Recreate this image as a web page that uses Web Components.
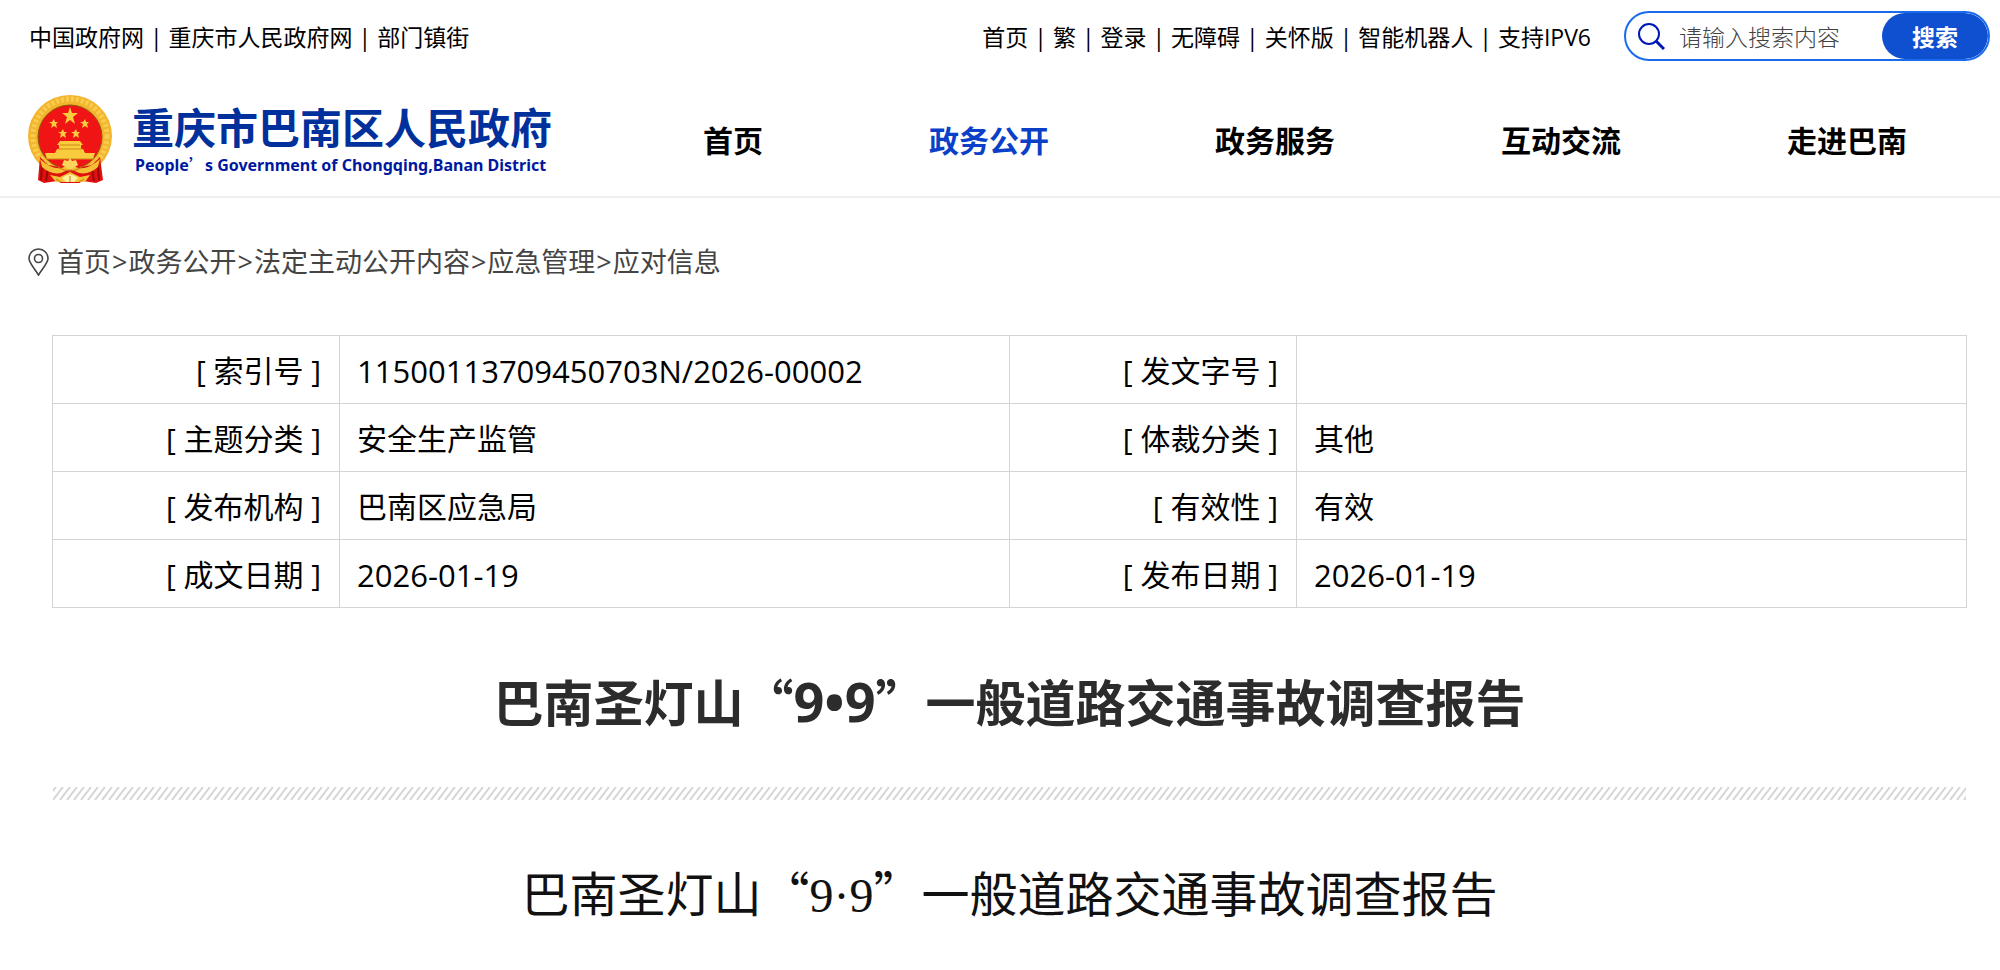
<!DOCTYPE html>
<html lang="zh-CN">
<head>
<meta charset="utf-8">
<meta name="viewport" content="width=device-width, initial-scale=1">
<title>巴南圣灯山“9•9”一般道路交通事故调查报告</title>
<style>
  body {
    margin: 0;
    background: #fff;
    color: #000;
    font-family: 'Open Sans', 'Noto Sans CJK SC', sans-serif;
  }
</style>
</head>
<body>
<gov-page>
  <gov-topbar slot="header">
    <gov-links slot="left">
      <a href="#">中国政府网</a> |
      <a href="#">重庆市人民政府网</a> |
      <a href="#">部门镇街</a>
    </gov-links>
    <gov-links slot="right">
      <a href="#">首页</a> |
      <a href="#">繁</a> |
      <a href="#">登录</a> |
      <a href="#">无障碍</a> |
      <a href="#">关怀版</a> |
      <a href="#">智能机器人</a> |
      <a href="#">支持IPV6</a>
    </gov-links>
    <gov-search slot="right"></gov-search>
  </gov-topbar>
  <gov-masthead slot="header">
    <gov-logo slot="logo"></gov-logo>
    <gov-nav-item>首页</gov-nav-item>
    <gov-nav-item active>政务公开</gov-nav-item>
    <gov-nav-item>政务服务</gov-nav-item>
    <gov-nav-item>互动交流</gov-nav-item>
    <gov-nav-item>走进巴南</gov-nav-item>
  </gov-masthead>
  <gov-breadcrumb>
    <a href="#">首页</a>&gt;
    <a href="#">政务公开</a>&gt;
    <a href="#">法定主动公开内容</a>&gt;
    <a href="#">应急管理</a>&gt;
    <a href="#">应对信息</a>
  </gov-breadcrumb>
  <gov-doc-info></gov-doc-info>
  <gov-article></gov-article>
</gov-page>

<script>
const define = (name, html, setup) => {
  const template = document.createElement('template');
  template.innerHTML = html;

  customElements.define(name, class extends HTMLElement {
    constructor() {
      super();
      this.attachShadow({ mode: 'open' });
      this.shadowRoot.appendChild(template.content.cloneNode(true));
    }

    connectedCallback() {
      if (setup) setup(this, this.shadowRoot);
    }
  });
};

define('gov-page', `
  <style>
    :host { display: block; }
    header { border-bottom: 2px solid #f0f0f0; }
    main { padding: 44px 28px 40px; }
  </style>
  <header><slot name="header"></slot></header>
  <main><slot></slot></main>
`);

define('gov-topbar', `
  <style>
    :host {
      display: flex;
      justify-content: space-between;
      align-items: center;
      padding: 11px 10px 0 29px;
    }
    .right { display: flex; align-items: center; gap: 33px; }
  </style>
  <slot name="left"></slot>
  <div class="right"><slot name="right"></slot></div>
`);

define('gov-links', `
  <style>
    :host {
      display: block;
      padding-top: 2px;
      font-size: 23px;
      line-height: 32px;
      white-space: nowrap;
    }
    ::slotted(a) { color: #000; text-decoration: none; }
  </style>
  <slot></slot>
`);

define('gov-search', `
  <style>
    :host { display: block; }
    form {
      display: flex;
      box-sizing: border-box;
      width: 366px;
      height: 50px;
      align-items: center;
      border: 2px solid #1a6cec;
      border-radius: 25px;
      overflow: hidden;
    }
    svg { flex: none; margin-left: 11px; }
    input {
      flex: 1;
      min-width: 0;
      padding: 2px 0 0 14px;
      border: 0;
      outline: 0;
      background: none;
      color: #333;
      font: 300 23px/32px 'Open Sans', 'Noto Sans CJK SC', sans-serif;
    }
    input::placeholder { color: #444; }
    button {
      width: 106px;
      height: 46px;
      padding: 2px 0 0;
      border: 0;
      border-radius: 23px;
      background: #0e50cf;
      color: #fff;
      font: bold 23px/32px 'Open Sans', 'Noto Sans CJK SC', sans-serif;
    }
  </style>
  <form>
    <svg width="28" height="28" viewBox="0 0 28 28" fill="none" stroke="#0018b8" stroke-width="2" aria-hidden="true">
      <circle cx="12" cy="12" r="10"/>
      <path d="M19 19l8 8" stroke-width="3"/>
    </svg>
    <input type="text" placeholder="请输入搜索内容" aria-label="请输入搜索内容">
    <button type="button">搜索</button>
  </form>
`);

define('gov-masthead', `
  <style>
    :host {
      display: flex;
      justify-content: space-between;
      align-items: flex-start;
      padding: 33px 10px 12px 28px;
    }
    nav { display: flex; padding-top: 27px; }
  </style>
  <slot name="logo"></slot>
  <nav><slot></slot></nav>
`);

define('gov-nav-item', `
  <style>
    :host { display: block; padding: 0 83px; }
    a {
      color: #000;
      font-size: 30px;
      font-weight: bold;
      line-height: 40px;
      text-decoration: none;
      white-space: nowrap;
    }
    :host([active]) a { color: #0a3fc8; }
  </style>
  <a href="#"><slot></slot></a>
`);

define('gov-logo', `
  <style>
    :host { display: block; }
    a {
      display: flex;
      gap: 19px;
      color: #00309c;
      text-decoration: none;
      white-space: nowrap;
    }
    strong { display: block; font-size: 42px; line-height: 48px; margin-top: 10px; }
    small {
      display: block;
      padding-left: 3px;
      color: #0018a0;
      font: bold 16px/24px 'Noto Sans', 'Noto Sans CJK SC', sans-serif;
    }
    small span { font-family: 'Noto Sans CJK SC', sans-serif; }
  </style>
  <a href="#">
    <svg width="85" height="90" viewBox="0 0 85 90" aria-hidden="true">
      <ellipse cx="42" cy="42" rx="42" ry="41" fill="#f2b52c"/>
      <ellipse cx="42" cy="42" rx="37" ry="37" fill="none" stroke="#f9cc50" stroke-width="5" stroke-dasharray="3 2"/>
      <ellipse cx="42" cy="43" rx="32" ry="32" fill="#f01414" stroke="#8a5a10" stroke-width="1"/>
      <g fill="#f8cc3c">
        <path d="M42 13l2 6h6l-5 4 2 7-5-4-5 4 2-7-5-4h6z"/>
        <path d="M26 25l1 3h3l-2 2 1 4-3-2-3 2 1-4-3-2h3z"/>
        <path d="M57 25l1 3h3l-2 2 1 4-3-2-3 2 1-4-3-2h3z"/>
        <path d="M35 35l1 3h3l-2 2 1 4-3-2-3 2 1-4-3-2h3z"/>
        <path d="M48 35l1 3h3l-2 2 1 4-3-2-3 2 1-4-3-2h3z"/>
        <path d="M32 47h20l3 4H29z"/>
        <path d="M31 51h22v4H31zM29 55h26l2 4H27zM17 59h50l-2 6H19z"/>
      </g>
      <path d="M32 51h20M30 55h24M18 65h48" stroke="#d08a18"/>
      <path d="M12 63l8 8 22 4 22-4 8-8 3 23-7 3-13-2-4 2H33l-4-2-13 2-6-3z" fill="#e01010"/>
      <path d="M14 70l-1 16M20 74l-2 13M70 70l1 16M64 74l2 13" stroke="#9c0808" stroke-width="2"/>
      <path d="M12 65q12 11 22 9l8-4 8 4q10 2 22-9l-2 8q-9 8-19 6l-9-4-9 4q-10 2-19-6z" fill="#f5be34"/>
      <path d="M34 71l2-5 4 1 2-3 2 3 4-1 2 5-8 5z" fill="#fbd45a"/>
      <path d="M30 73q12 8 24 0" fill="none" stroke="#c87814"/>
      <path d="M22 81l10 2 10-5 10 5 10-2-5 7H28z" fill="#f5c236"/>
      <path d="M34 84q8-7 16 0l-4 4h-8z" fill="#fff0a0"/>
      <path d="M28 85l5 3M56 85l-5 3M42 82v6" stroke="#c87814"/>
    </svg>
    <span>
      <strong>重庆市巴南区人民政府</strong>
      <small>People<span>’</span>s Government of Chongqing,Banan District</small>
    </span>
  </a>
`);

define('gov-breadcrumb', `
  <style>
    :host {
      display: flex;
      align-items: center;
      gap: 1px;
      color: #444;
      font-size: 27px;
      line-height: 40px;
      white-space: nowrap;
    }
    svg { flex: none; margin-right: 7px; }
    ::slotted(a) { color: #444; text-decoration: none; }
  </style>
  <svg width="21" height="28" viewBox="0 0 21 28" fill="none" stroke="#444" stroke-width="1.6" aria-hidden="true">
    <path d="M10.500 27C7 21 1 15 1 10.500a9.500 9.500 0 0 1 19 0c0 4.500-6 10.500-9.500 16.500z"/>
    <circle cx="10.500" cy="10.500" r="4"/>
  </svg>
  <slot></slot>
`);

const docInfo = [
  ['索引号', '11500113709450703N/2026-00002', '发文字号', ''],
  ['主题分类', '安全生产监管', '体裁分类', '其他'],
  ['发布机构', '巴南区应急局', '有效性', '有效'],
  ['成文日期', '2026-01-19', '发布日期', '2026-01-19'],
];

define('gov-doc-info', `
  <style>
    :host { display: block; margin: 53px 5px 0 24px; }
    table {
      width: 100%;
      border-collapse: collapse;
      table-layout: fixed;
      font-size: 30px;
      line-height: 40px;
    }
    th, td { height: 68px; padding: 2px 18px 0 17px; border: 1px solid #d4d4d4; box-sizing: border-box; }
    th { width: 15%; font-weight: normal; text-align: right; }
    td { width: 35%; text-align: left; }
    .code { font-size: 31px; }
  </style>
  <table><tbody></tbody></table>
`, (host, root) => {
  const cell = value => `<td${/^\d/.test(value) ? ' class="code"' : ''}>${value}</td>`;
  root.querySelector('tbody').innerHTML = docInfo.map(([k1, v1, k2, v2]) => `
    <tr>
      <th scope="row">[ ${k1} ]</th>${cell(v1)}
      <th scope="row">[ ${k2} ]</th>${cell(v2)}
    </tr>
  `).join('');
});

define('gov-article', `
  <style>
    :host { display: block; margin: 0 6px 0 25px; text-align: center; }
    h1, p { margin: 0; font-family: 'Noto Sans CJK SC', sans-serif; }
    h1 {
      padding: 57px 0 52px;
      color: #2c2c2c;
      font-size: 50px;
      font-weight: bold;
      line-height: 70px;
    }
    h1 span { font-family: 'Open Sans', sans-serif; font-size: 54px; line-height: 1; }
    .rule { display: block; width: 100%; height: 13px; }
    p { padding-top: 56px; color: #111; font-size: 48px; line-height: 70px; }
    p span { font-family: 'Liberation Serif', serif; }
  </style>
  <h1>巴南圣灯山“<span>9•9</span>”一般道路交通事故调查报告</h1>
  <svg class="rule" aria-hidden="true">
    <pattern id="hatch" width="7" height="13" patternUnits="userSpaceOnUse">
      <path d="M-14 13L-4 0M-7 13L3 0M0 13L10 0M7 13L17 0" stroke="#d6d6d6" stroke-width="2"/>
    </pattern>
    <rect width="100%" height="13" fill="url(#hatch)"/>
  </svg>
  <p>巴南圣灯山“<span>9·9</span>”一般道路交通事故调查报告</p>
`);
</script>
</body>
</html>
